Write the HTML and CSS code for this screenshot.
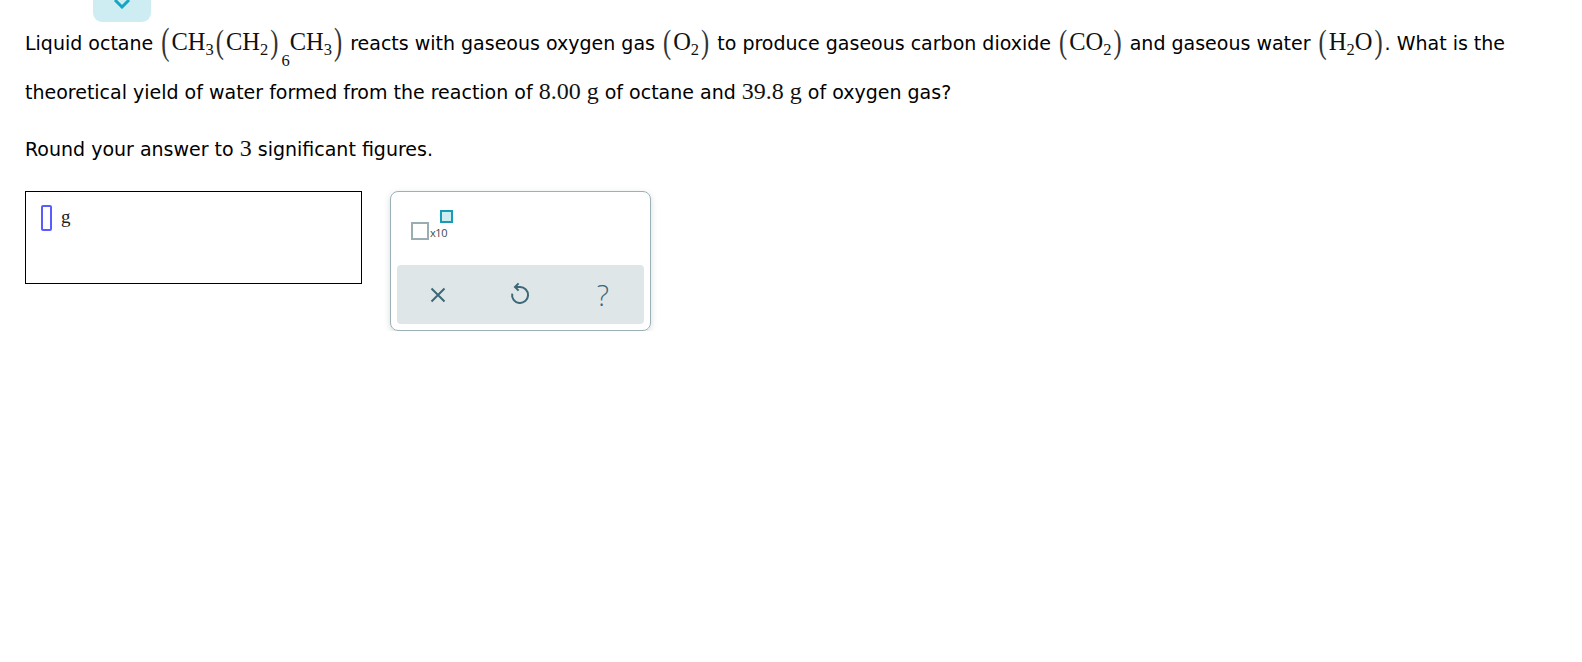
FILE: index.html
```html
<!DOCTYPE html>
<html>
<head>
<meta charset="utf-8">
<link rel="stylesheet" href="styles.css">
</head>
<body>
<div class="tab"><svg width="18" height="10" viewBox="0 0 18 10"><path d="M2 1 L9 8 L16 1" fill="none" stroke="#18a4c2" stroke-width="3"/></svg></div>
<div class="page">
  <p class="question">Liquid octane <span class="m"><span class="bp">(</span>CH<sub>3</sub><span class="mp">(</span>CH<sub>2</sub><span class="mp">)</span><sub class="low">6</sub>CH<sub>3</sub><span class="bp">)</span></span> reacts with gaseous oxygen gas <span class="m"><span class="mp">(</span>O<sub>2</sub><span class="mp">)</span></span> to produce gaseous carbon dioxide <span class="m"><span class="mp">(</span>CO<sub>2</sub><span class="mp">)</span></span> and gaseous water <span class="m"><span class="mp">(</span>H<sub>2</sub>O<span class="mp">)</span></span>. What is the theoretical yield of water formed from the reaction of <span class="n">8.00 g</span> of octane and <span class="n">39.8 g</span> of oxygen gas?</p>
  <p class="round">Round your answer to <span class="n">3</span> significant figures.</p>
  <div class="row">
    <div class="answer">
      <span class="cursor"></span><span class="unit">g</span>
    </div>
    <div class="panel">
      <div class="tools">
        <div class="sci">
          <span class="sq"></span><span class="x10">x10</span><span class="exp"></span>
        </div>
      </div>
      <div class="actions">
        <div class="act"><svg width="16" height="16" viewBox="0 0 16 16"><path d="M1.5 1.5 L14.5 14.5 M14.5 1.5 L1.5 14.5" stroke="#3d6877" stroke-width="2" fill="none"/></svg></div>
        <div class="act"><svg class="undo" width="20" height="24" viewBox="0 0 20 24"><path d="M5 6 H10 A8 8 0 1 1 2.2 12.6" stroke="#3d6877" stroke-width="2" fill="none"/><path d="M8.6 2.4 L5 6 L8.6 9.6" stroke="#3d6877" stroke-width="2" fill="none"/></svg></div>
        <div class="act q">?</div>
      </div>
    </div>
  </div>
</div>
</body>
</html>
```
FILE: styles.css
```css
html, body {
  margin: 0;
  padding: 0;
  background: #fff;
}
body {
  font-family: "DejaVu Sans", Verdana, sans-serif;
  font-size: 19px;
  color: #000;
}
.tab {
  position: absolute;
  left: 93px;
  top: 0;
  width: 58px;
  height: 22px;
  background: #cdedf3;
  border-radius: 0 0 9px 9px;
  display: flex;
  justify-content: center;
  align-items: flex-start;
}
.tab svg {
  display: block;
  margin-top: -1px;
}
.page {
  padding-left: 25px;
}
.question {
  margin: 18px 0 0 0;
  line-height: 48px;
  width: 1530px;
}
.m, .n {
  font-family: "Liberation Serif", "Times New Roman", serif;
  font-size: 24.5px;
  color: #111;
}
.n {
  font-size: 24px;
}
.m sub {
  font-size: 16.5px;
  vertical-align: -5px;
  line-height: 0;
}
.m sub.low {
  vertical-align: -16px;
  margin-left: 1px;
}
.bp, .mp {
  display: inline-block;
  transform: scaleY(1.4);
  line-height: 0;
  color: #333;
  margin: 0 2px;
}
.bp {
  transform: scaleY(1.55);
}
.round {
  margin: 20px 0 0 0;
  line-height: 24px;
}
.row {
  display: flex;
  gap: 28px;
  margin-top: 30px;
  align-items: flex-start;
}
.answer {
  border: 1px solid #000;
  display: flex;
  align-items: flex-start;
  padding: 13px 0 0 15px;
  box-sizing: border-box;
  width: 337px;
  height: 93px;
}
.cursor {
  width: 11px;
  height: 26px;
  border: 2px solid #5a5cff;
  border-radius: 2px;
  box-sizing: border-box;
  display: block;
}
.unit {
  font-family: "Liberation Serif", "Times New Roman", serif;
  font-size: 19px;
  margin-left: 9px;
  line-height: 24px;
  color: #222;
}
.panel {
  width: 261px;
  height: 140px;
  border: 1px solid #9cb0b7;
  border-radius: 8px;
  box-sizing: border-box;
  box-shadow: 0 2px 6px rgba(60, 80, 90, 0.2);
  padding: 0 6px 6px 6px;
  display: flex;
  flex-direction: column;
}
.tools {
  height: 73px;
}
.sci {
  position: relative;
  margin: 18px 0 0 14px;
  width: 50px;
  height: 32px;
}
.sq {
  position: absolute;
  left: 0;
  top: 12px;
  width: 18px;
  height: 18px;
  border: 2px solid #9aadb3;
  box-sizing: border-box;
}
.x10 {
  position: absolute;
  left: 19px;
  top: 17px;
  font-family: "Open Sans", "Liberation Sans", sans-serif;
  font-size: 11px;
  line-height: 12px;
  color: #3a4a50;
  letter-spacing: -0.4px;
}
.exp {
  position: absolute;
  left: 29px;
  top: 0;
  width: 13px;
  height: 13px;
  border: 2px solid #189cb6;
  background: #cdedf3;
  box-sizing: border-box;
}
.actions {
  flex: 1;
  background: #dfe6e8;
  border-radius: 4px;
  display: flex;
}
.act {
  flex: 1;
  display: flex;
  justify-content: center;
  align-items: center;
}
.act svg {
  display: block;
}
.undo {
  margin-top: -4px;
}
.q {
  font-family: "Open Sans", "Liberation Sans", sans-serif;
  font-size: 29px;
  font-weight: 300;
  color: #3d6877;
  line-height: 1;
}
```
